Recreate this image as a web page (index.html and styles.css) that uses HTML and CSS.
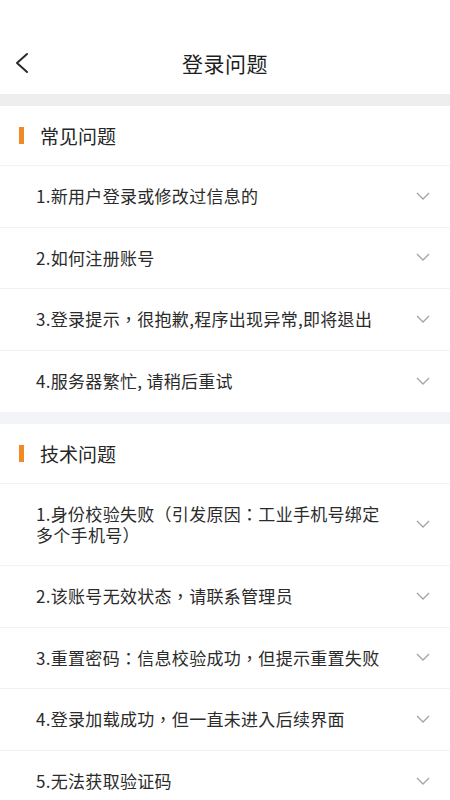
FILE: index.html
```html
<!DOCTYPE html>
<html lang="zh-CN">
<head>
<meta charset="utf-8">
<title>登录问题</title>
<link rel="stylesheet" href="styles.css">
</head>
<body>
<div class="page">
  <header class="topbar">
    <div class="nav">
      <svg class="back" width="14" height="22" viewBox="0 0 14 22"><polyline points="12,2 2,11 12,20" fill="none" stroke="#2a2a2a" stroke-width="2" stroke-linecap="round" stroke-linejoin="round"/></svg>
      <h1 class="title">登录问题</h1>
    </div>
  </header>
  <div class="band band-a"></div>
  <section class="group">
    <h2 class="group-title"><span class="mark"></span>常见问题</h2>
    <ul class="list">
      <li class="row"><span class="q">1.新用户登录或修改过信息的</span><svg class="chev" width="14" height="8" viewBox="0 0 14 8"><polyline points="1,1 7,7 13,1" fill="none" stroke="#a3a3a3" stroke-width="1.3"/></svg></li>
      <li class="row"><span class="q">2.如何注册账号</span><svg class="chev" width="14" height="8" viewBox="0 0 14 8"><polyline points="1,1 7,7 13,1" fill="none" stroke="#a3a3a3" stroke-width="1.3"/></svg></li>
      <li class="row"><span class="q" lang="zh-TW">3.登录提示，很抱歉,程序出现异常,即将退出</span><svg class="chev" width="14" height="8" viewBox="0 0 14 8"><polyline points="1,1 7,7 13,1" fill="none" stroke="#a3a3a3" stroke-width="1.3"/></svg></li>
      <li class="row"><span class="q">4.服务器繁忙, 请稍后重试</span><svg class="chev" width="14" height="8" viewBox="0 0 14 8"><polyline points="1,1 7,7 13,1" fill="none" stroke="#a3a3a3" stroke-width="1.3"/></svg></li>
    </ul>
  </section>
  <div class="band band-b"></div>
  <section class="group">
    <h2 class="group-title"><span class="mark"></span>技术问题</h2>
    <ul class="list">
      <li class="row"><span class="q" lang="zh-TW">1.身份校验失败（引发原因：工业手机号绑定多个手机号）</span><svg class="chev" width="14" height="8" viewBox="0 0 14 8"><polyline points="1,1 7,7 13,1" fill="none" stroke="#a3a3a3" stroke-width="1.3"/></svg></li>
      <li class="row"><span class="q" lang="zh-TW">2.该账号无效状态，请联系管理员</span><svg class="chev" width="14" height="8" viewBox="0 0 14 8"><polyline points="1,1 7,7 13,1" fill="none" stroke="#a3a3a3" stroke-width="1.3"/></svg></li>
      <li class="row"><span class="q" lang="zh-TW">3.重置密码：信息校验成功，但提示重置失败</span><svg class="chev" width="14" height="8" viewBox="0 0 14 8"><polyline points="1,1 7,7 13,1" fill="none" stroke="#a3a3a3" stroke-width="1.3"/></svg></li>
      <li class="row"><span class="q" lang="zh-TW">4.登录加载成功，但一直未进入后续界面</span><svg class="chev" width="14" height="8" viewBox="0 0 14 8"><polyline points="1,1 7,7 13,1" fill="none" stroke="#a3a3a3" stroke-width="1.3"/></svg></li>
      <li class="row"><span class="q">5.无法获取验证码</span><svg class="chev" width="14" height="8" viewBox="0 0 14 8"><polyline points="1,1 7,7 13,1" fill="none" stroke="#a3a3a3" stroke-width="1.3"/></svg></li>
    </ul>
  </section>
</div>
</body>
</html>
```

FILE: styles.css
```css
* { box-sizing: border-box; }
html, body { margin: 0; padding: 0; background: #fff; }
body {
  font-family: "Noto Sans CJK SC", "Noto Sans", sans-serif;
  color: #333;
}
.page { width: 450px; overflow: hidden; }
.topbar { padding-top: 32px; background: #fff; }
.nav {
  height: 62px;
  display: flex;
  align-items: center;
  justify-content: center;
  position: relative;
}
.back { position: absolute; left: 15px; top: 20px; }
.title {
  margin: 0;
  font-size: 21px;
  font-weight: 400;
  color: #1e1e1e;
  letter-spacing: 0.5px;
}
.band { height: 12px; }
.band-a { background: #eeeeee; }
.band-b { background: #f2f4f7; }
.group-title {
  margin: 0;
  height: 60px;
  display: flex;
  align-items: center;
  gap: 16px;
  padding-left: 19px;
  font-size: 19px;
  font-weight: 400;
  color: #262626;
  border-bottom: 1px solid #f2f2f2;
}
.mark { width: 5px; height: 17px; background: #f08a24; }
.list { list-style: none; margin: 0; padding: 0; }
.row {
  display: flex;
  align-items: center;
  justify-content: space-between;
  padding: 19px 20px 20px 36px;
  border-bottom: 1px solid #f2f2f2;
  min-height: 61.5px;
}
.row:last-child { border-bottom: none; }
.q {
  font-size: 17px;
  line-height: 21px;
  max-width: 352px;
  color: #2b2b2b;
  letter-spacing: 0.3px;
}
.chev { flex: none; }
```
